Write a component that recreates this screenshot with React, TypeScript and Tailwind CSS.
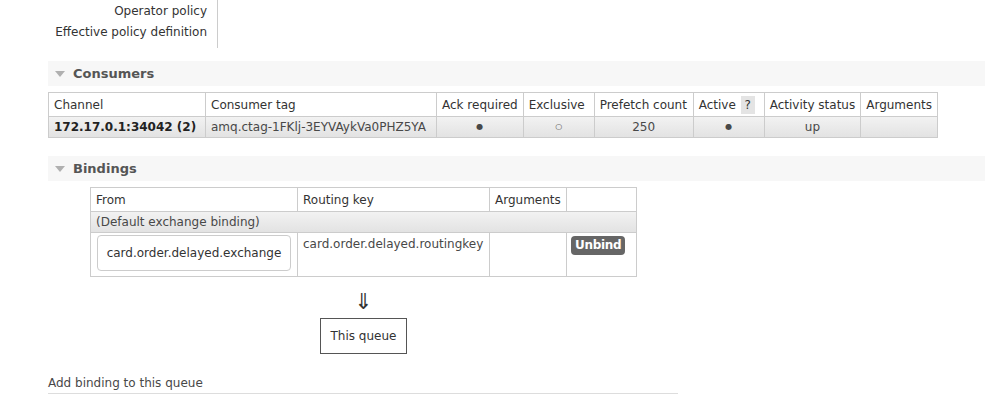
import React from "react";

const font = { fontFamily: '"DejaVu Sans", Verdana, sans-serif' };

const Section: React.FC<{ title: string; children: React.ReactNode }> = ({ title, children }) => (
  <div>
    <div className="ml-[48px] h-[25px] bg-[#f7f7f7] flex items-center pl-[7px]">
      <span className="w-0 h-0 border-l-[5px] border-r-[5px] border-t-[6px] border-l-transparent border-r-transparent border-t-[#b0b0b0] mr-[8px]" />
      <span className="font-bold text-[13px] text-[#555]">{title}</span>
    </div>
    {children}
  </div>
);

const consumerCols = [
  { label: "Channel", w: "w-[157px]" },
  { label: "Consumer tag", w: "w-[231px]" },
  { label: "Ack required", w: "w-[86px]" },
  { label: "Exclusive", w: "w-[71px]" },
  { label: "Prefetch count", w: "w-[99px]" },
  { label: "Active", w: "w-[71px]" },
  { label: "Activity status", w: "w-[96px]" },
  { label: "Arguments", w: "w-[77px]" },
];

export default function App() {
  return (
    <div className="w-[985px] h-[396px] bg-white text-[12px] text-[#484848] overflow-hidden" style={font}>
      {/* policy rows */}
      <div className="flex h-[48px]">
        <div className="w-[218px] pr-[10px] flex flex-col items-end text-[#333] pt-[1px] leading-[21px] border-r border-[#ccc]">
          <span>Operator policy</span>
          <span>Effective policy definition</span>
        </div>
      </div>

      <div className="h-[13px]" />
      <Section title="Consumers">
        <table className="ml-[48px] mt-[6px] border-collapse table-fixed">
          <thead>
            <tr className="h-[24px]">
              {consumerCols.map((c) => (
                <th key={c.label} className={`${c.w} border border-[#ccc] font-normal text-left px-[5px] text-[#333] whitespace-nowrap`}>
                  {c.label === "Active" ? (
                    <span>
                      Active <span className="bg-[#e4e4e4] px-[4px] py-[2px] ml-[1px]">?</span>
                    </span>
                  ) : (
                    c.label
                  )}
                </th>
              ))}
            </tr>
          </thead>
          <tbody>
            <tr className="h-[21px] bg-gradient-to-b from-[#f2f2f2] to-[#e2e2e2]">
              <td className="border border-[#ccc] px-[5px] font-bold text-[#222] whitespace-nowrap">172.17.0.1:34042 (2)</td>
              <td className="border border-[#ccc] px-[5px] whitespace-nowrap">amq.ctag-1FKlj-3EYVAykVa0PHZ5YA</td>
              <td className="border border-[#ccc] text-center text-[8px]">●</td>
              <td className="border border-[#ccc] text-center text-[8px]">○</td>
              <td className="border border-[#ccc] text-center">250</td>
              <td className="border border-[#ccc] text-center text-[8px]">●</td>
              <td className="border border-[#ccc] text-center">up</td>
              <td className="border border-[#ccc]"></td>
            </tr>
          </tbody>
        </table>
      </Section>

      <div className="h-[18px]" />
      <Section title="Bindings">
        <table className="ml-[90px] mt-[6px] border-collapse table-fixed">
          <thead>
            <tr className="h-[24px]">
              <th className="w-[207px] border border-[#ccc] font-normal text-left px-[5px] text-[#333]">From</th>
              <th className="w-[192px] border border-[#ccc] font-normal text-left px-[5px] text-[#333]">Routing key</th>
              <th className="w-[77px] border border-[#ccc] font-normal text-left px-[5px] text-[#333]">Arguments</th>
              <th className="w-[70px] border border-[#ccc]"></th>
            </tr>
          </thead>
          <tbody>
            <tr className="h-[21px] bg-gradient-to-b from-[#f2f2f2] to-[#e2e2e2]">
              <td colSpan={4} className="border border-[#ccc] px-[5px]">(Default exchange binding)</td>
            </tr>
            <tr className="h-[44px]">
              <td className="border border-[#ccc] px-[6px] py-[2px] align-top">
                <div className="border border-[#ccc] rounded-[4px] h-[36px] flex items-center justify-center text-[#333]">
                  card.order.delayed.exchange
                </div>
              </td>
              <td className="border border-[#ccc] px-[5px] pt-[2px] align-top whitespace-nowrap">card.order.delayed.routingkey</td>
              <td className="border border-[#ccc]"></td>
              <td className="border border-[#ccc] align-top pt-[3px] pl-[4px]">
                <button className="bg-[#666] text-white font-bold rounded-[4px] px-[4px] h-[19px] leading-[19px] text-[12px] tracking-[-0.3px]" style={font}>
                  Unbind
                </button>
              </td>
            </tr>
          </tbody>
        </table>
        <div className="ml-[320px] w-[87px] flex flex-col items-center">
          <span className="text-[22px] leading-[22px] mt-[14px] text-[#333]">⇓</span>
          <div className="mt-[5px] w-[87px] h-[36px] border border-[#555] flex items-center justify-center text-[#333]">
            This queue
          </div>
        </div>
      </Section>

      <div className="ml-[48px] mt-[22px] w-[630px] border-b border-[#ddd] pb-[2px] leading-[15px]">
        Add binding to this queue
      </div>
    </div>
  );
}
